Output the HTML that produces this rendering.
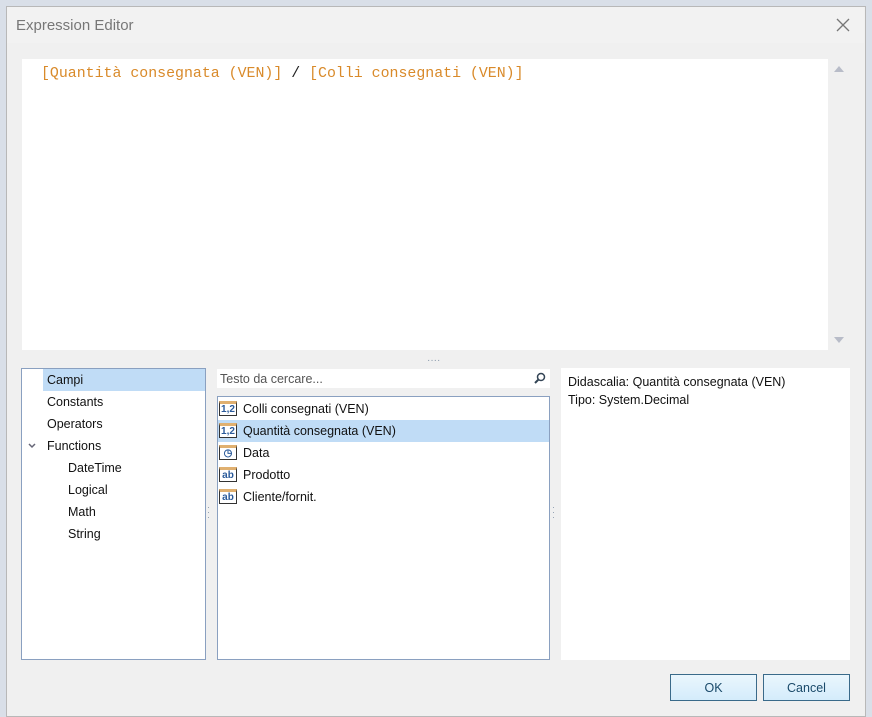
<!DOCTYPE html>
<html><head><style>
body{margin:0;width:872px;height:717px;background:#d9dfe8;position:relative;overflow:hidden;font-family:"Liberation Sans",sans-serif;font-size:12.5px;color:#111}
.dlg{position:absolute;left:6px;top:6px;width:858px;height:709px;background:#f0f0f0;border:1px solid #b8b8b8}
.abs{position:absolute}
.tree div{position:absolute;height:22px;line-height:23px}
.list div{position:absolute;left:0;height:22px;line-height:23px;width:331px}
.ic{position:absolute;left:1px;top:3px;width:18px;height:15px;border:1px solid #333;border-top:3px solid #e0b070;box-sizing:border-box;background:#fff;font-size:10px;line-height:11px;text-align:center;color:#2a5a9a;font-weight:bold}
.btn{position:absolute;top:674px;width:85px;height:25px;border:1px solid #3a6a8a;background:linear-gradient(#eaf6fd,#d4ecfb);text-align:center;line-height:26px;color:#1a4a6a;font-size:12.5px}
</style></head><body>
<div class="dlg"></div>
<div class="abs" style="left:7px;top:7px;width:857px;height:36px;background:#f2f2f2"></div>
<div class="abs" style="left:16px;top:17px;font-size:15px;color:#777">Expression Editor</div>
<svg class="abs" style="left:836px;top:18px" width="14" height="14"><path d="M1 1L13 13M13 1L1 13" stroke="#777" stroke-width="1.3"/></svg>
<div class="abs" style="left:22px;top:59px;width:806px;height:291px;background:#fff"></div>
<div class="abs" style="left:41px;top:66px;font-family:'Liberation Mono',monospace;font-size:14.9px;color:#d98a2a">[Quantità consegnata (VEN)] <span style="color:#222">/</span> [Colli consegnati (VEN)]</div>
<svg class="abs" style="left:834px;top:66px" width="10" height="6"><path d="M0 6L5 0L10 6Z" fill="#b8bcc8"/></svg>
<svg class="abs" style="left:834px;top:337px" width="10" height="6"><path d="M0 0L5 6L10 0Z" fill="#b8bcc8"/></svg>
<div class="abs" style="left:427px;top:355px;color:#8899aa;font-size:10px">····</div>
<div class="abs tree" style="left:21px;top:368px;width:183px;height:290px;background:#fff;border:1px solid #8aa0c0">
<div style="left:21px;top:0;width:162px;background:#c0dcf6;padding-left:4px;box-sizing:border-box">Campi</div>
<div style="left:25px;top:22px">Constants</div>
<div style="left:25px;top:44px">Operators</div>
<div style="left:25px;top:66px">Functions</div>
<div style="left:46px;top:88px">DateTime</div>
<div style="left:46px;top:110px">Logical</div>
<div style="left:46px;top:132px">Math</div>
<div style="left:46px;top:154px">String</div>
</div>
<svg class="abs" style="left:28px;top:443px" width="8" height="6"><path d="M1 1L4 4L7 1" stroke="#667" stroke-width="1.5" fill="none"/></svg>
<div class="abs" style="left:207px;top:505px;color:#8899aa;font-size:9px;line-height:5px">·<br>·<br>·</div>
<div class="abs" style="left:217px;top:369px;width:333px;height:19px;background:#fff"></div>
<div class="abs" style="left:220px;top:372px;color:#555">Testo da cercare...</div>
<svg class="abs" style="left:534px;top:372px" width="12" height="12"><circle cx="7" cy="5" r="3.5" stroke="#345" stroke-width="1.5" fill="none"/><path d="M4.5 7.5L1 11" stroke="#345" stroke-width="2"/></svg>
<div class="abs list" style="left:217px;top:396px;width:331px;height:262px;background:#fff;border:1px solid #8aa0c0">
<div style="top:1px"><span class="ic">1,2</span><span style="position:absolute;left:25px">Colli consegnati (VEN)</span></div>
<div style="top:23px;background:#c0dcf6"><span class="ic">1,2</span><span style="position:absolute;left:25px">Quantità consegnata (VEN)</span></div>
<div style="top:45px"><span class="ic">◷</span><span style="position:absolute;left:25px">Data</span></div>
<div style="top:67px"><span class="ic">ab</span><span style="position:absolute;left:25px">Prodotto</span></div>
<div style="top:89px"><span class="ic">ab</span><span style="position:absolute;left:25px">Cliente/fornit.</span></div>
</div>
<div class="abs" style="left:552px;top:505px;color:#8899aa;font-size:9px;line-height:5px">·<br>·<br>·</div>
<div class="abs" style="left:561px;top:368px;width:289px;height:292px;background:#fff"></div>
<div class="abs" style="left:568px;top:373px;line-height:18px">Didascalia: Quantità consegnata (VEN)<br>Tipo: System.Decimal</div>
<div class="btn" style="left:670px">OK</div>
<div class="btn" style="left:763px">Cancel</div>
</body></html>
